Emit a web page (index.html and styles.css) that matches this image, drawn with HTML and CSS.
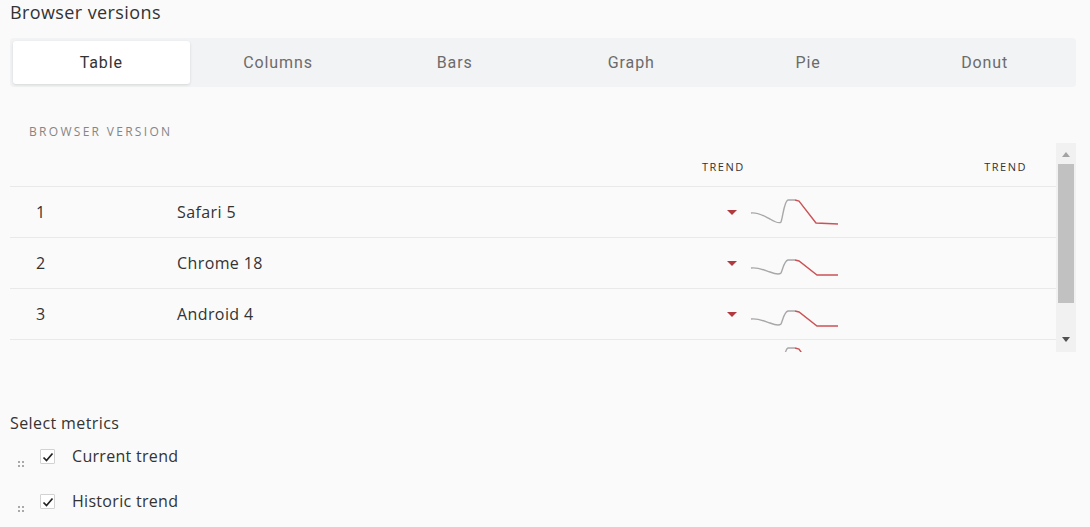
FILE: index.html
```html
<!DOCTYPE html>
<html lang="en">
<head>
  <meta charset="UTF-8">
  <meta name="viewport" content="width=device-width, initial-scale=1.0">
  <title>Browser versions</title>
  <link rel="stylesheet" href="styles.css">
</head>
<body>
  <h1 class="title">Browser versions</h1>

  <div class="tabs">
    <div class="tab active">Table</div>
    <div class="tab">Columns</div>
    <div class="tab">Bars</div>
    <div class="tab">Graph</div>
    <div class="tab">Pie</div>
    <div class="tab">Donut</div>
  </div>

  <div class="section">
    <div class="section-label">BROWSER VERSION</div>

    <div class="table-wrap">
      <div class="table">
        <div class="row head">
          <div></div>
          <div></div>
          <div class="th">TREND</div>
          <div class="th right">TREND</div>
        </div>

        <div class="row">
          <div class="num">1</div>
          <div class="name">Safari 5</div>
          <div class="trend">
            <span class="down"></span>
            <svg width="90" height="30" viewBox="0 0 90 30">
              <path class="gray" d="M1 16 C8 15 14 19 20 22 C25 25 29 27 31 25 C33 20 34 4 38 3 L45 3"/>
              <path class="red" d="M45 3 L49 4 L66 26 L88 27"/>
            </svg>
          </div>
          <div></div>
        </div>

        <div class="row">
          <div class="num">2</div>
          <div class="name">Chrome 18</div>
          <div class="trend">
            <span class="down"></span>
            <svg width="90" height="30" viewBox="0 0 90 30">
              <path class="gray" d="M1 20 C8 19 14 22 20 24 C25 26 29 27 31 25 C33 21 34 13 38 12 L45 12"/>
              <path class="red" d="M45 12 L49 13 L67 27 L88 27"/>
            </svg>
          </div>
          <div></div>
        </div>

        <div class="row">
          <div class="num">3</div>
          <div class="name">Android 4</div>
          <div class="trend">
            <span class="down"></span>
            <svg width="90" height="30" viewBox="0 0 90 30">
              <path class="gray" d="M1 20 C8 19 14 22 20 24 C25 26 29 27 31 25 C33 21 34 13 38 12 L45 12"/>
              <path class="red" d="M45 12 L49 13 L67 27 L88 27"/>
            </svg>
          </div>
          <div></div>
        </div>

        <div class="row">
          <div class="num"></div>
          <div class="name"></div>
          <div class="trend">
            <span class="down"></span>
            <svg class="spill" width="90" height="30" viewBox="0 0 90 30">
              <path class="gray" d="M1 14 C8 13 14 17 20 20 C25 23 29 25 31 23 C33 18 34 -1 38 -2 L45 -2"/>
              <path class="red" d="M45 -2 L49 -1 L66 24 L88 25"/>
            </svg>
          </div>
          <div></div>
        </div>
      </div>

      <div class="scrollbar">
        <span class="arrow up"></span>
        <div class="track"><div class="thumb"></div></div>
        <span class="arrow dn"></span>
      </div>
    </div>
  </div>

  <div class="metrics">
    <div class="metrics-label">Select metrics</div>
    <div class="metric first">
      <span class="handle"></span>
      <span class="check">
        <svg width="12" height="12" viewBox="0 0 12 12"><path d="M1.5 6.5 L4.5 9.5 L10.5 2.5"/></svg>
      </span>
      <span class="metric-name">Current trend</span>
    </div>
    <div class="metric">
      <span class="handle"></span>
      <span class="check">
        <svg width="12" height="12" viewBox="0 0 12 12"><path d="M1.5 6.5 L4.5 9.5 L10.5 2.5"/></svg>
      </span>
      <span class="metric-name">Historic trend</span>
    </div>
  </div>
</body>
</html>
```

FILE: styles.css
```css
body {
  font-family: "Open Sans", "Liberation Sans", sans-serif;
  margin: 0;
  padding: 0 14px 0 10px;
  background: #fafafa;
  color: #333;
}
.title {
  font-size: 18px;
  font-weight: 400;
  letter-spacing: 0.4px;
  line-height: 24px;
  margin: 0;
  color: #333;
}
.tabs {
  display: grid;
  grid-template-columns: repeat(6, 1fr);
  margin-top: 14px;
  padding: 3px;
  background: #f2f3f4;
  border-radius: 4px;
}
.tab {
  height: 43px;
  line-height: 44px;
  text-align: center;
  font-family: Roboto, "Liberation Sans", sans-serif;
  font-size: 16px;
  letter-spacing: 0.9px;
  color: #6b6b6b;
}
.tab.active {
  background: #fff;
  color: #333;
  border-radius: 3px;
  box-shadow: 0 1px 3px rgba(0, 0, 0, 0.12);
}
.section-label {
  margin-top: 37px;
  padding-left: 19px;
  font-size: 12px;
  line-height: 16px;
  letter-spacing: 2.3px;
  color: #858585;
}
.table-wrap {
  display: flex;
  margin-top: 3px;
  height: 209px;
}
.table {
  flex: 1;
  overflow: hidden;
}
.row {
  display: grid;
  grid-template-columns: 167px 525px 200px 1fr;
  height: 50px;
  align-items: center;
  border-bottom: 1px solid #e9e9e9;
  font-size: 16px;
  letter-spacing: 0.4px;
}
.row.head {
  height: 43px;
  align-items: start;
}
.th {
  padding-top: 16px;
  font-size: 11px;
  line-height: 16px;
  letter-spacing: 1.5px;
  color: #333;
}
.th.right {
  text-align: right;
  padding-right: 29px;
}
.num {
  padding-left: 26px;
}
.trend {
  display: flex;
  align-items: center;
  padding-left: 25px;
}
.down {
  width: 0;
  height: 0;
  border-left: 5px solid transparent;
  border-right: 5px solid transparent;
  border-top: 5px solid #b03a3f;
  margin-right: 13px;
}
.trend svg {
  fill: none;
  stroke-width: 1.4;
}
.trend svg.spill {
  overflow: visible;
}
.gray {
  stroke: #a8a8a8;
}
.red {
  stroke: #cc5256;
}
.scrollbar {
  width: 20px;
  background: #f1f1f1;
  display: flex;
  flex-direction: column;
  align-items: center;
}
.arrow {
  width: 0;
  height: 0;
  border-left: 4px solid transparent;
  border-right: 4px solid transparent;
}
.arrow.up {
  margin-top: 9px;
  border-bottom: 5px solid #a3a3a3;
}
.arrow.dn {
  margin-bottom: 10px;
  border-top: 5px solid #505050;
}
.track {
  flex: 1;
  width: 16px;
  padding-top: 7px;
}
.thumb {
  height: 139px;
  background: #c1c1c1;
}
.metrics-label {
  margin-top: 61px;
  font-size: 16px;
  letter-spacing: 0.4px;
  line-height: 20px;
}
.metric {
  display: flex;
  align-items: flex-start;
  height: 45px;
}
.metric.first {
  margin-top: 16px;
}
.handle {
  width: 2px;
  height: 2px;
  margin: 12px 20px 0 8px;
  background: #a9a9a9;
  box-shadow: 4px 0 #a9a9a9, 0 4px #a9a9a9, 4px 4px #a9a9a9;
}
.check {
  width: 13px;
  height: 13px;
  border: 1px solid #d2d2d2;
  background: #fff;
  border-radius: 1px;
  display: flex;
  align-items: center;
  justify-content: center;
}
.check svg {
  fill: none;
  stroke: #222;
  stroke-width: 1.7;
}
.metric-name {
  margin-left: 17px;
  font-size: 16px;
  letter-spacing: 0.3px;
  line-height: 15px;
}
```
